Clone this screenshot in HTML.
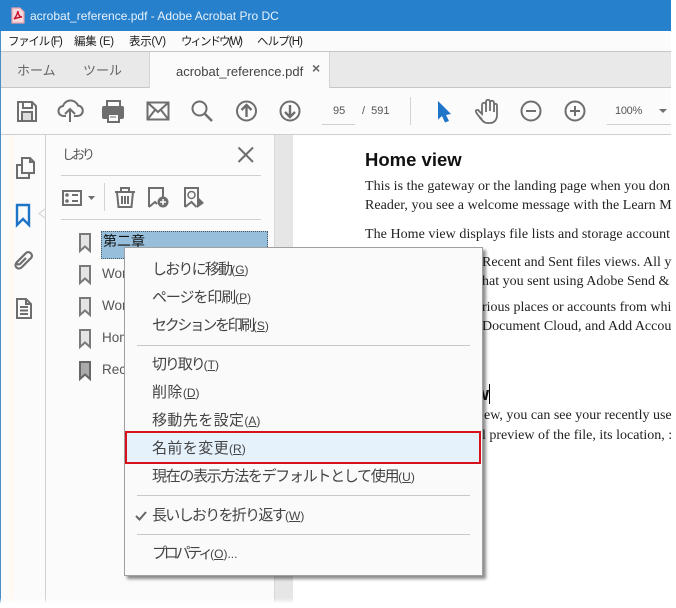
<!DOCTYPE html>
<html><head><meta charset="utf-8"><style>
*{box-sizing:border-box}
html,body{margin:0;padding:0;background:#fff}
body{width:676px;height:608px;overflow:hidden;position:relative;font-family:"Liberation Sans","Noto Sans CJK JP",sans-serif;color:#222}
.a{position:absolute;white-space:nowrap}
.mb{position:absolute;top:34px;font-size:11.5px;line-height:16px;color:#222;white-space:nowrap}
.m{position:absolute;left:27px;font-size:15px;line-height:20px;color:#444;white-space:nowrap}
.m small{font-size:12px;letter-spacing:0}
.m u{text-decoration:underline}
.sep{position:absolute;left:12px;width:333px;height:1px;background:#c8c8c8}
.t{position:absolute;left:365px;font:14px/18px "Liberation Serif","Noto Serif CJK SC",serif;color:#222;white-space:nowrap}
.bl{position:absolute;left:102px;font-size:13.5px;color:#555;line-height:18px;white-space:nowrap}
svg{position:absolute;overflow:visible}
.g{fill:none;stroke:#6e6e6e;stroke-width:2}
</style></head><body>
<div class="a" style="left:0;top:0;width:671px;height:31px;background:#2680cc"></div>
<div class="a" style="left:0;top:31px;width:671px;height:572px;background:#fbfbfb"></div>
<div class="a" style="left:0;top:31px;width:1px;height:572px;background:#4a8fc4"></div>
<div class="a" style="left:9px;top:135px;width:5px;height:468px;background:#fff9f3"></div>
<svg style="left:11px;top:7px" width="14" height="17"><path d="M1 1h8l4 4v11H1z" fill="#f6d9dc" stroke="#e8a0a6" stroke-width="1.2"/><path d="M7 4c-1 4-2 6-4 8M7 4c0 4 2 6 4 6-3 0-5 1-8 2" fill="none" stroke="#c8102e" stroke-width="1.4"/></svg>
<div class="a" style="left:30px;top:8px;font-size:12px;line-height:16px;color:#e8f2fb;letter-spacing:0">acrobat_reference.pdf - Adobe Acrobat Pro DC</div>
<div class="mb" style="left:8px;letter-spacing:-1.300px">ファイル (F)</div>
<div class="mb" style="left:74px;letter-spacing:-.3px">編集 (E)</div>
<div class="mb" style="left:129px;letter-spacing:-.3px">表示(V)</div>
<div class="mb" style="left:181px;letter-spacing:-2px">ウィンドウ(W)</div>
<div class="mb" style="left:257px;letter-spacing:-.9px">ヘルプ(H)</div>
<div class="a" style="left:1px;top:51px;width:670px;height:37px;background:#e9e9e9;border-top:1px solid #c6c6c6;border-bottom:1px solid #c6c6c6"></div>
<div class="a" style="left:149px;top:52px;width:181px;height:36px;background:#fbfbfb;border-left:1px solid #d4d4d4;border-right:1px solid #d4d4d4"></div>
<div class="a" style="left:17px;top:61px;font-size:13px;line-height:20px;color:#666">ホーム</div>
<div class="a" style="left:83px;top:61px;font-size:13px;line-height:20px;color:#666">ツール</div>
<div class="a" style="left:176px;top:63px;font-size:13px;line-height:17px;color:#444">acrobat_reference.pdf</div>
<div class="a" style="left:312px;top:61px;font-size:14px;line-height:15px;color:#666;font-weight:bold">×</div>
<div class="a" style="left:1px;top:134px;width:670px;height:1px;background:#cfcfcf"></div>
<svg style="left:0;top:88px" width="676" height="46">
<path d="M22 33v-9h10v9z" fill="#ddd"/>
<g class="g">
<path d="M18 14h14l4 4v15H18z"/><path d="M23 14v6h9v-6M22 33v-9h10v9"/>
<path d="M66 28h-2a5 5 0 0 1-1-10a8 8 0 0 1 15-.5a5 5 0 0 1-1 10.500h-3"/><path d="M70 34V21m-5 5 5-5 5 5"/>
<path d="M147.500 14.500h21v17h-21z"/><path d="M147.500 14.500l10.500 9.500 10.500-9.500M147.500 31.500l7.500-9.500M168.500 31.500l-7.500-9.500"/>
<circle cx="199.500" cy="20.500" r="7"/><path d="M205 26l7 7" stroke-width="2.500"/>
<circle cx="246.500" cy="23" r="9.500"/><path d="M246.500 29V17m-5 5 5-5 5 5" stroke-width="2.400"/>
<circle cx="290" cy="23" r="9.500"/><path d="M290 17v12m-5-5 5 5 5-5" stroke-width="2.400"/>
<circle cx="531" cy="23" r="9.500"/><path d="M526 23h10"/>
<circle cx="575" cy="23" r="9.500"/><path d="M570 23h10M575 18v10"/>
<path d="M482 31c-2-1-5-5-6-7c-1-2 2-3 3-1l3 3V17c0-3 4-3 4 0V14c0-3 4-3 4 0V15c0-3 4-3 4 0V18c0-3 3-3 3 0V27c0 5-3 8-7 8h-3c-3 0-4-2-6-4zM486 17v7M490 15v8M494 17v7" stroke-width="1.800"/>
<path d="M107 19v-6h13v6"/>
</g>
<rect x="102" y="18" width="22" height="13" rx="2" fill="#6e6e6e"/><rect x="108" y="26" width="11" height="8" fill="#fbfbfb" stroke="#6e6e6e" stroke-width="2"/><path d="M110 29h6" stroke="#6e6e6e"/>
<path d="M438 13l13 13-5 1 3 6-4 1.500-3-6.500-4 3.500z" fill="#1e74c6"/>
<path d="M659 21h8l-4 4z" fill="#6e6e6e"/>
<path d="M410.500 9v28" stroke="#d4d4d4"/>
</svg>
<div class="a" style="left:322px;top:124px;width:33px;height:1px;background:#cfcfcf"></div>
<div class="a" style="left:333px;top:104px;font-size:11px;line-height:15px;color:#555">95</div>
<div class="a" style="left:362px;top:104px;font-size:11px;line-height:15px;color:#555">/&nbsp;&nbsp;591</div>
<div class="a" style="left:607px;top:124px;width:64px;height:1px;background:#cfcfcf"></div>
<div class="a" style="left:615px;top:104px;font-size:11px;line-height:15px;color:#555;letter-spacing:-.3px">100%</div>

<!-- body panes -->
<div class="a" style="left:45px;top:135px;width:1px;height:468px;background:#d0d0d0"></div>
<div class="a" style="left:274px;top:135px;width:1px;height:468px;background:#d8d8d8"></div>
<div class="a" style="left:275px;top:135px;width:18px;height:468px;background:#e6e6e6"></div>
<div class="a" style="left:293px;top:135px;width:383px;height:473px;background:#fff"></div>
<svg style="left:0;top:135px" width="280" height="250">
<g class="g">
<path d="M22 30h-5v13h12v-5"/><path d="M22 23h8l4 4v11H22zM30 23v4h4"/>
<path d="M17 70h12v20l-6-6-6 6z" stroke="#1e74c6" stroke-width="2.400"/>
<path d="M22 122l-5 5c-4 4 1 9 5 5l9-9c3-3-2-8-5-5l-9 9c-1 2 1 3 3 2l6-6" stroke-width="2.200"/>
<path d="M17 164h9l5 5v14H17zM26 164v5h5M20 172h8M20 175.500h8M20 179h8"/>
</g>
<path d="M45 74l-6 4.500 6 4.500" fill="#fbfbfb" stroke="#d0d0d0"/>
<path d="M238.500 12.500l14.500 14.500m0-14.500-14.500 14.500" stroke="#6e6e6e" stroke-width="2" fill="none"/>
<path d="M61 40.500h200M61 84.500h200" stroke="#cfcfcf"/>
<path d="M104.500 48v28" stroke="#d4d4d4"/>
<g class="g">
<rect x="63" y="56" width="18" height="14"/><path d="M72 60h6M72 66h6"/>
<path d="M115 57h20M121 57v-4h8v4M117 57l1.500 15h13l1.500-15M122 61v8M125 61v8M128 61v8"/>
<path d="M149 72V53h14v10M149 72l6-5 2 2"/>
<path d="M185 72V53h13v11M185 72l6.500-5 5 5"/><circle cx="191.500" cy="60" r="3.500" stroke-width="1.500"/>
</g>
<circle cx="67" cy="60" r="1.800" fill="#6e6e6e"/><circle cx="67" cy="66" r="1.800" fill="#6e6e6e"/>
<circle cx="163" cy="67" r="5.500" fill="#6e6e6e"/><path d="M160 67h6M163 64v6" stroke="#fff" stroke-width="1.500"/>
<path d="M197 61l7 7-7 5z" fill="#6e6e6e"/>
<path d="M88 61h7l-3.500 4z" fill="#6e6e6e"/>
<g fill="#e4e4e4" stroke="#7a7a7a" stroke-width="2">
<path d="M80 99h10v17l-5-4.500-5 4.500z"/><path d="M80 131h10v17l-5-4.500-5 4.500z"/><path d="M80 163h10v17l-5-4.500-5 4.500z"/><path d="M80 195h10v17l-5-4.500-5 4.500z"/><path d="M80 227h10v17l-5-4.500-5 4.500z" fill="#aaa" stroke="#666"/>
</g>
</svg>
<div class="a" style="left:62px;top:146px;font-size:13px;line-height:18px;color:#555;letter-spacing:-3px">しおり</div>
<div class="a" style="left:101px;top:231px;width:167px;height:28px;background:#97bfdb;border:1px dotted #456"></div>
<div class="a" style="left:103px;top:231px;font-size:14px;line-height:20px;color:#111">第二章</div>
<div class="bl" style="top:265px">Word</div>
<div class="bl" style="top:297px">Word</div>
<div class="bl" style="top:329px">Home</div>
<div class="bl" style="top:361px">Recent</div>

<!-- doc -->
<div class="a" style="left:365px;top:149px;font:bold 18.500px/22px 'Liberation Sans',sans-serif;color:#111">Home view</div>
<div class="t" style="top:178px;letter-spacing:.05px">This is the gateway or the landing page when you don</div>
<div class="t" style="top:197px;letter-spacing:.05px">Reader, you see a welcome message with the Learn M</div>
<div class="t" style="top:226px;letter-spacing:.05px">The Home view displays file lists and storage account</div>
<div class="t" style="top:254px;left:482px">Recent and Sent files views. All y</div>
<div class="t" style="top:273px;left:482px">hat you sent using Adobe Send &amp;</div>
<div class="t" style="top:299px;left:482px">rious places or accounts from whi</div>
<div class="t" style="top:318px;left:482px">Document Cloud, and Add Accou</div>
<div class="a" style="left:475px;top:383px;font:bold 18px/22px 'Liberation Sans',sans-serif;color:#111">w</div>
<div class="a" style="left:489px;top:384px;width:1px;height:20px;background:#000"></div>
<div class="t" style="top:407px;left:484px">ew, you can see your recently use</div>
<div class="t" style="top:427px;left:482px">l preview of the file, its location, :</div>
<div class="a" style="left:672px;top:135px;width:4px;height:473px;background:#fff"></div>
<div class="a" style="left:0;top:598px;width:676px;height:6px;background:linear-gradient(rgba(255,255,255,0),#fff)"></div>

<!-- context menu -->
<div class="a" style="left:124px;top:247px;width:359px;height:329px;background:#fafafa;border:1px solid #a0a0a0;box-shadow:3px 3px 3px rgba(0,0,0,.45)">
<div class="m" style="top:12px;letter-spacing:-1.800px">しおりに移動<small>(<u>G</u>)</small></div>
<div class="m" style="top:40px;letter-spacing:-1.100px">ページを印刷<small>(<u>P</u>)</small></div>
<div class="m" style="top:68px;letter-spacing:-2.400px">セクションを印刷<small>(<u>S</u>)</small></div>
<div class="sep" style="top:97px"></div>
<div class="m" style="top:107px;letter-spacing:-2.100px">切り取り<small>(<u>T</u>)</small></div>
<div class="m" style="top:135px;letter-spacing:.4px">削除<small>(<u>D</u>)</small></div>
<div class="m" style="top:163px;letter-spacing:.4px">移動先を設定<small>(<u>A</u>)</small></div>
<div class="a" style="left:0;top:183px;width:356px;height:33px;background:#e5f1fb;border:2px solid #d8101a"></div>
<div class="m" style="top:191px;letter-spacing:.4px">名前を変更<small>(<u>R</u>)</small></div>
<div class="m" style="top:219px;letter-spacing:-1.300px">現在の表示方法をデフォルトとして使用<small>(<u>U</u>)</small></div>
<div class="sep" style="top:247px"></div>
<svg style="left:10px;top:262px" width="12" height="12"><path d="M1 6l3.500 3.500L11 2" fill="none" stroke="#666" stroke-width="2"/></svg>
<div class="m" style="top:258px;letter-spacing:-1.700px">長いしおりを折り返す<small>(<u>W</u>)</small></div>
<div class="sep" style="top:286px"></div>
<div class="m" style="top:296px;letter-spacing:-3.200px">プロパティ<small>(<u>O</u>)...</small></div>
</div>
</body></html>
